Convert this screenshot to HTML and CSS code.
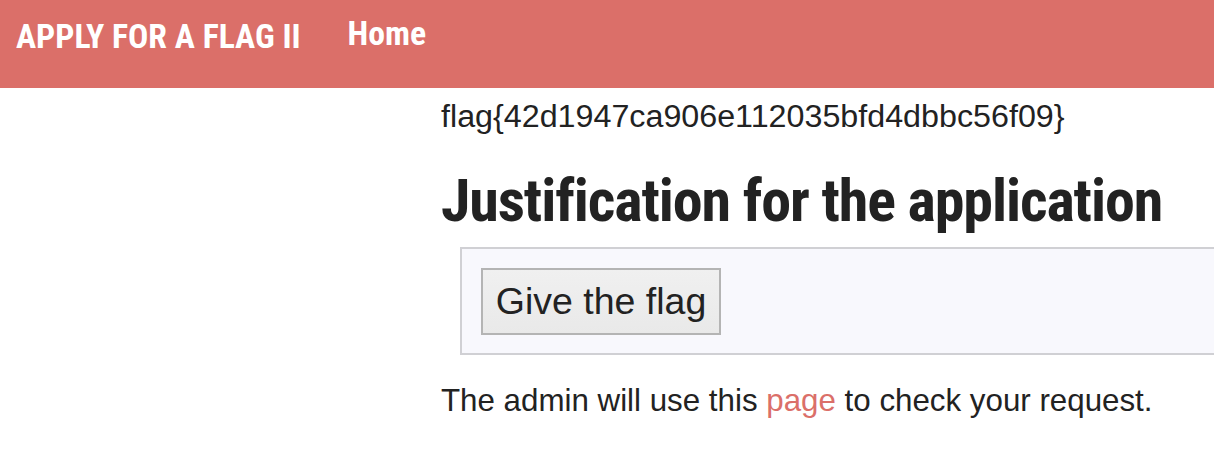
FILE: index.html
```html
<!DOCTYPE html>
<html>
<head>
<meta charset="utf-8">
<title>Apply for a flag II</title>
<link rel="stylesheet" href="styles.css">
</head>
<body>
<header class="navbar">
  <span class="brand">APPLY FOR A FLAG II</span>
  <a class="nav-link" href="#">Home</a>
</header>
<main class="content">
  <p class="flag">flag{42d1947ca906e112035bfd4dbbc56f09}</p>
  <h1 class="title">Justification for the application</h1>
  <form class="form-box">
    <button type="button" class="btn">Give the flag</button>
  </form>
  <p class="note">The admin will use this <a href="#" class="link">page</a> to check your request.</p>
</main>
</body>
</html>
```
FILE: styles.css
```css
html, body {
  margin: 0;
  padding: 0;
  background: #ffffff;
  overflow: hidden;
}
body {
  font-family: "Liberation Sans", Arial, sans-serif;
  color: #222222;
  width: 1214px;
  height: 464px;
}
.navbar {
  height: 88px;
  background: #db6f69;
  display: flex;
  align-items: flex-start;
  padding: 0 0 0 16px;
  box-sizing: border-box;
}
.brand, .nav-link {
  font-family: "Roboto Condensed", "Roboto", sans-serif;
  font-stretch: condensed;
  font-weight: bold;
  color: #ffffff;
  font-size: 33.7px;
  line-height: 1;
  padding-top: 20px;
  text-decoration: none;
  white-space: nowrap;
}
.nav-link {
  margin-left: 47px;
  padding-top: 17px;
}
.content {
  margin-left: 441px;
  width: 900px;
}
.flag {
  margin: 0;
  padding-top: 8px;
  font-size: 32.25px;
  line-height: 40px;
  white-space: nowrap;
}
.title {
  font-family: "Roboto Condensed", "Roboto", sans-serif;
  font-stretch: condensed;
  font-weight: bold;
  font-size: 60px;
  letter-spacing: -1.1px;
  line-height: 72px;
  margin: 29px 0 10px 0;
  color: #222222;
  white-space: nowrap;
}
.form-box {
  margin: 0 0 0 19px;
  height: 108px;
  box-sizing: border-box;
  background: #f8f8fd;
  border: 2px solid #d0d0d4;
  border-right: none;
  padding: 19px 0 0 19px;
}
.btn {
  font-family: "Liberation Sans", Arial, sans-serif;
  font-size: 37.5px;
  color: #222222;
  height: 67px;
  width: 240px;
  padding: 0;
  border: 2px solid #b4b4b4;
  background: linear-gradient(#f0f0f0, #e9e9e9);
  border-radius: 0;
}
.note {
  margin: 26px 0 0 0;
  font-size: 31.3px;
  line-height: 40px;
  white-space: nowrap;
}
.link {
  color: #db6f69;
  text-decoration: none;
}
```
